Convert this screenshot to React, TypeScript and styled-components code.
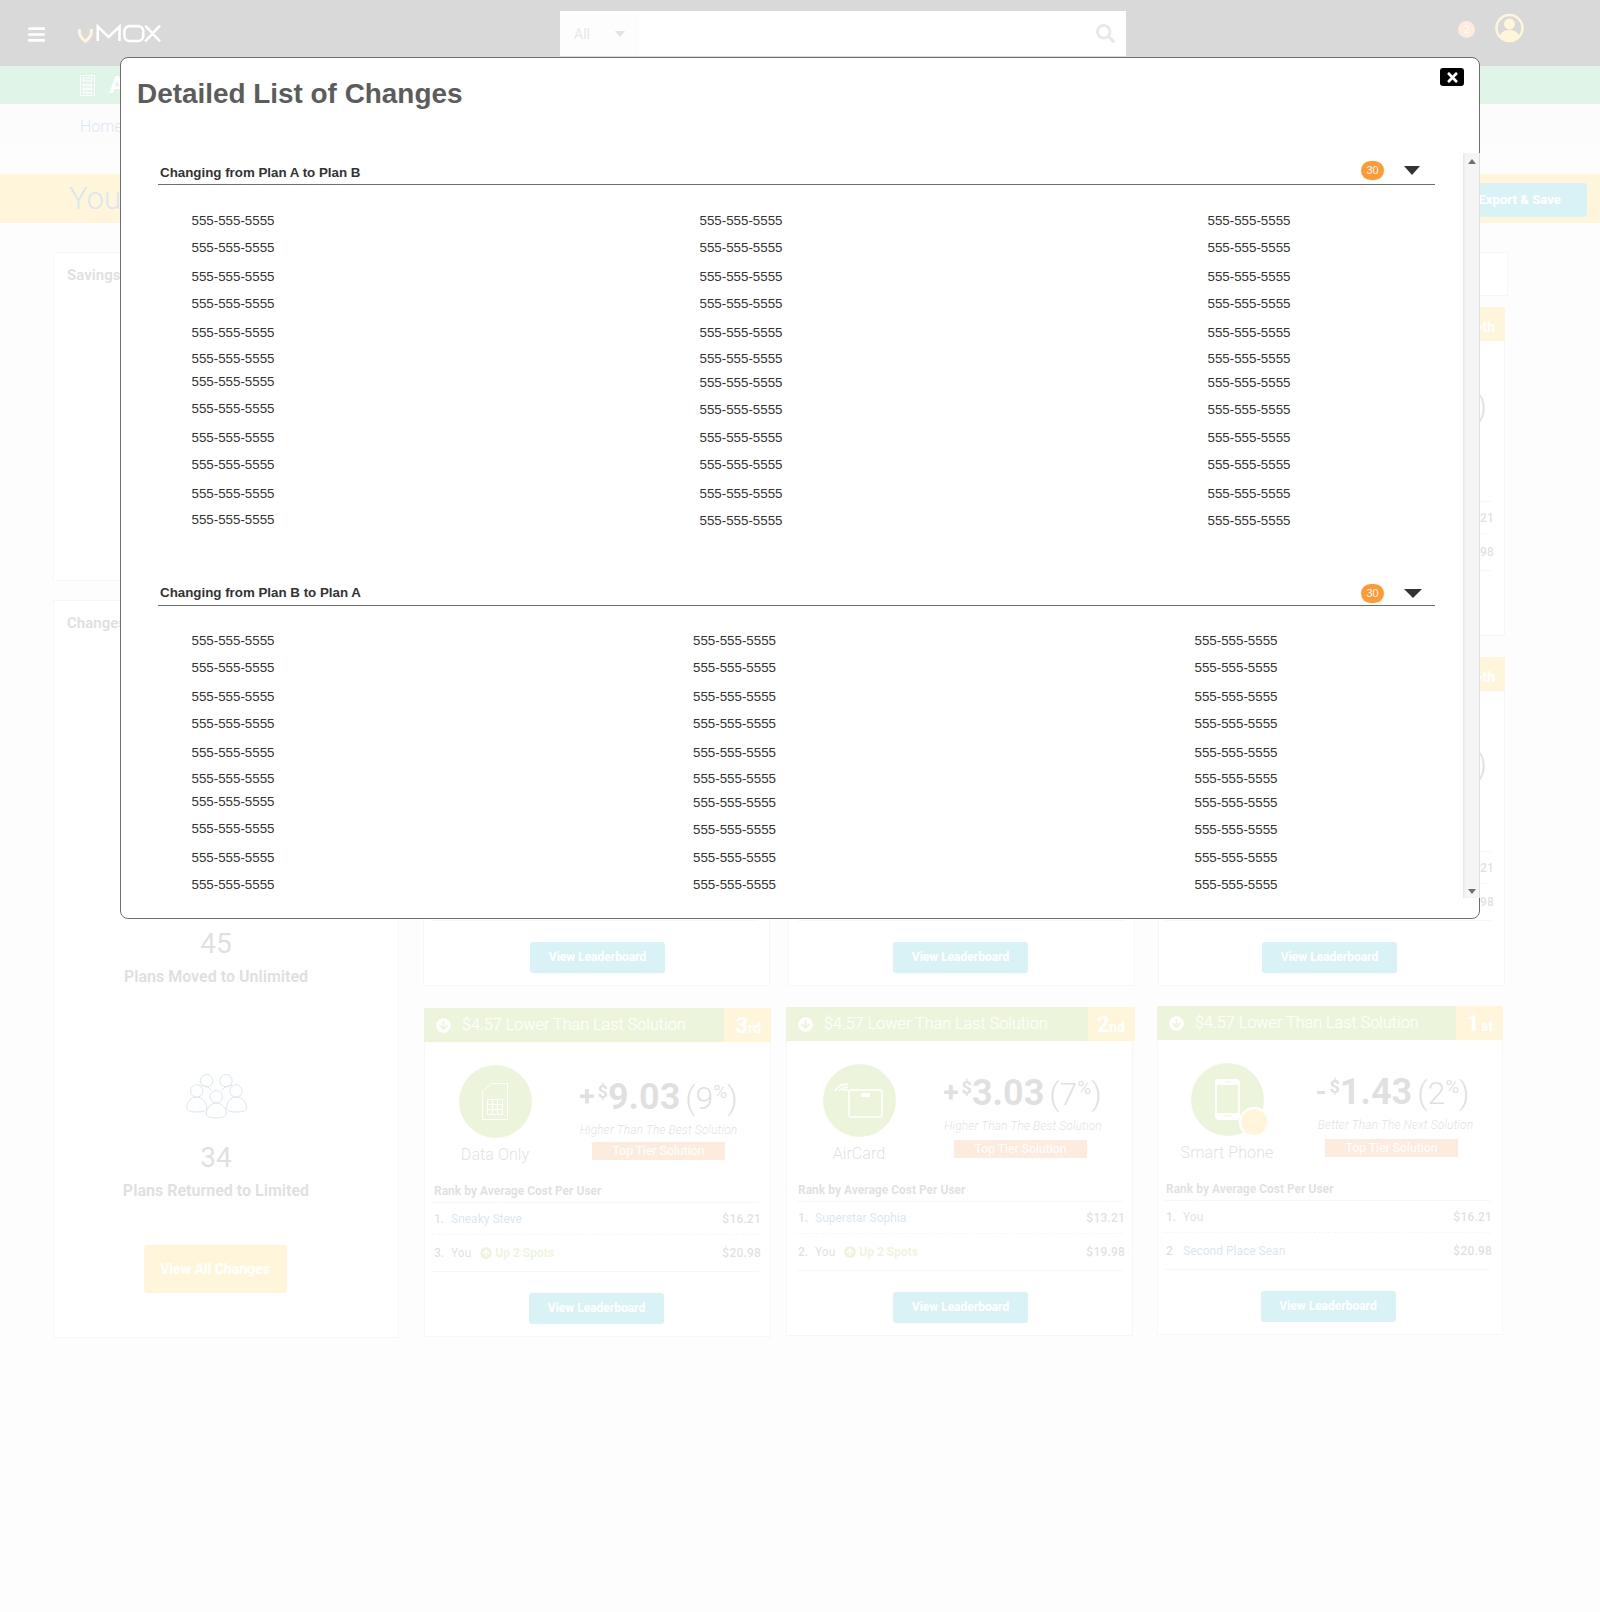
import React from 'react';
import styled, {createGlobalStyle} from 'styled-components';
import {FaArrowCircleDown, FaArrowCircleUp, FaBars, FaSearch, FaTimes} from 'react-icons/fa';

const GlobalStyle = createGlobalStyle`
    html, body {
        margin: 0;
        padding: 0;
    }
    body {
        background: #f2f2f2;
        font-family: Roboto, "Liberation Sans", sans-serif;
    }
`;

const colors = {
    text: '#333',
    green: '#82bc16',
    yellow: '#ffbc08',
    orange: '#f17a1c',
    cyan: '#02a8c3',
    blue: '#01589b',
    line: '#c9c9c9',
};

type IconKind = 'sim' | 'aircard' | 'phone';

interface Standing {
    rank: string;
    name: string;
    price: string;
    isLink?: boolean;
    spots?: string;
}

interface CardData {
    place: string;
    suffix: string;
    icon: IconKind;
    label: string;
    sign: string;
    amount: string;
    percent: string;
    note: string;
    priceTop: number;
    iconShift: number;
    rankShift: number;
    buttonShift: number;
    standings: Standing[];
    width?: number;
    lift?: number;
    headOver?: number;
    noteShift?: number;
    priceShift?: number;
    tagBump?: number;
    placeGap?: number;
}

const sophia: Standing[] = [
    {rank: '1.', name: 'Superstar Sophia', price: '$13.21', isLink: true},
    {rank: '2.', name: 'You', price: '$19.98', spots: 'Up 2 Spots'},
];
const steve: Standing[] = [
    {rank: '1.', name: 'Sneaky Steve', price: '$16.21', isLink: true},
    {rank: '3.', name: 'You', price: '$20.98', spots: 'Up 2 Spots'},
];
const sean: Standing[] = [
    {rank: '1.', name: 'You', price: '$16.21'},
    {rank: '2', name: 'Second Place Sean', price: '$20.98', isLink: true},
];

const higher = 'Higher Than The Best Solution';

const cardRows: {offset: number; top: number; gaps: number[]; cards: CardData[]}[] = [
    {
        offset: -1,
        top: 0,
        gaps: [18, 23],
        cards: [
            {place: '5', suffix: 'th', icon: 'sim', label: 'Data Only', sign: '+', amount: '9.03', percent: '9', note: higher, priceTop: 34, iconShift: -3, rankShift: -1, buttonShift: 1, standings: steve, width: 347},
            {place: '6', suffix: 'th', icon: 'aircard', label: 'AirCard', sign: '+', amount: '3.03', percent: '7', note: higher, priceTop: 31, iconShift: -1, rankShift: 1, buttonShift: -1, standings: sophia, width: 347},
            {place: '4', suffix: 'th', icon: 'phone', label: 'Smart Phone', sign: '+', amount: '12.03', percent: '9', note: higher, priceTop: 43, iconShift: -4, rankShift: -2, buttonShift: -2, standings: steve, width: 347, priceShift: 10},
        ],
    },
    {
        offset: -1,
        top: 0,
        gaps: [18, 23],
        cards: [
            {place: '5', suffix: 'th', icon: 'sim', label: 'Data Only', sign: '+', amount: '9.03', percent: '9', note: higher, priceTop: 34, iconShift: -3, rankShift: -1, buttonShift: 1, standings: steve, width: 347},
            {place: '6', suffix: 'th', icon: 'aircard', label: 'AirCard', sign: '+', amount: '3.03', percent: '7', note: higher, priceTop: 31, iconShift: -1, rankShift: 1, buttonShift: -1, standings: sophia, width: 347},
            {place: '4', suffix: 'th', icon: 'phone', label: 'Smart Phone', sign: '+', amount: '12.03', percent: '9', note: higher, priceTop: 51, iconShift: -4, rankShift: -2, buttonShift: -2, standings: steve, width: 347, priceShift: 10},
        ],
    },
    {
        offset: 0,
        top: 1,
        gaps: [15, 24],
        cards: [
            {place: '3', suffix: 'rd', icon: 'sim', label: 'Data Only', sign: '+', amount: '9.03', percent: '9', note: higher, priceTop: 34, iconShift: -3, rankShift: -1, buttonShift: -1, standings: steve, width: 347, tagBump: 1},
            {place: '2', suffix: 'nd', icon: 'aircard', label: 'AirCard', sign: '+', amount: '3.03', percent: '7', note: higher, priceTop: 31, iconShift: -1, rankShift: 1, buttonShift: 1, standings: sophia, width: 347, lift: 1, headOver: 2, priceShift: 4, noteShift: 5},
            {place: '1', suffix: 'st', icon: 'phone', label: 'Smart Phone', sign: '-', amount: '1.43', percent: '2', note: 'Better Than The Next Solution', priceTop: 31, iconShift: -4, rankShift: -2, buttonShift: -2, standings: sean, lift: 2, noteShift: 8, priceShift: 2, placeGap: 2},
        ],
    },
];

const leftGaps = [27, 29, 27, 29, 26, 23, 27, 29, 27, 29, 26, 16];
const otherGaps = [27, 29, 27, 29, 26, 24, 27, 28, 27, 29, 27, 16];

const lists = [
    {title: 'Changing from Plan A to Plan B', step: 508, titleGap: 3, badgeGap: 1, arrow: 16, arrowRight: 15, listTop: 28},
    {title: 'Changing from Plan B to Plan A', step: 501.5, titleGap: 4, badgeGap: -2, arrow: 18, arrowRight: 13, listTop: 27},
];

const Page = styled.div`
    position: relative;
    width: 1600px;
    min-height: 1612px;
    overflow: hidden;
`;

const TopBar = styled.header`
    height: 66px;
    background: #020202;
    display: flex;
    align-items: flex-start;
`;

const MenuButton = styled.div`
    margin: 25px 0 0 28px;
    width: 17px;
    color: #fff;
    font-size: 19px;
    line-height: 19px;
    display: flex;
`;

const Logo = styled.svg`
    margin: 24px 0 0 33px;
    width: 83px;
    height: 20px;
`;

const SearchBox = styled.div`
    margin: 11px 0 0 399px;
    width: 566px;
    height: 45px;
    display: flex;
    background: #fff;
`;

const SearchScope = styled.div`
    width: 79px;
    background: #eee;
    display: flex;
    align-items: center;
    padding-left: 14px;
    box-sizing: border-box;
    color: #555;
    font-size: 14px;
`;

const Caret = styled.span`
    margin-left: 25px;
    border-left: 5px solid transparent;
    border-right: 5px solid transparent;
    border-top: 6px solid #444;
`;

const SearchInput = styled.div`
    flex: 1;
    display: flex;
    align-items: center;
    justify-content: flex-end;
    padding-right: 11px;
    color: #666;
    font-size: 19px;
`;

const Alerts = styled.div`
    margin: 21px 0 0 332px;
    width: 17px;
    height: 17px;
    border-radius: 50%;
    background: ${colors.orange};
    color: #fff;
    font-size: 11px;
    line-height: 17px;
    text-align: center;
`;

const Avatar = styled.svg`
    margin: 13px 0 0 20px;
    width: 29px;
    height: 30px;
`;

const SectionBar = styled.div`
    height: 38px;
    background: #30b666;
    display: flex;
    align-items: center;
    color: #fff;
    padding-left: 80px;
    font-size: 24px;
    font-weight: 700;
    gap: 14px;
`;

const Crumbs = styled.div`
    height: 40px;
    background: #eaeaea;
    padding-left: 80px;
    font-size: 16px;
    line-height: 45px;
    font-weight: 300;
    color: ${colors.blue};
`;

const TitleBand = styled.div`
    margin-top: 30px;
    height: 49px;
    background: ${colors.yellow};
    position: relative;
    display: flex;
    align-items: center;
    justify-content: space-between;
    padding: 0 13px 0 69px;
`;

const BandTitle = styled.h1`
    margin: 0;
    font-size: 31px;
    font-weight: 300;
    color: ${colors.blue};
`;

const ExportButton = styled.div`
    width: 135px;
    height: 34px;
    margin-top: 3px;
    box-sizing: border-box;
    padding-right: 26px;
    background: ${colors.cyan};
    border-radius: 3px;
    color: #fff;
    font-size: 13.2px;
    font-weight: 700;
    line-height: 34px;
    text-align: right;
`;

const Content = styled.main`
    display: flex;
    gap: 25px;
    padding: 29px 0 0 53px;
`;

const LeftColumn = styled.div`
    width: 346px;
    display: flex;
    flex-direction: column;
    gap: 19px;
`;

const Panel = styled.section<{$h: number}>`
    box-sizing: border-box;
    height: ${(p) => p.$h}px;
    background: #fff;
    border: 1px solid ${colors.line};
    display: flex;
    flex-direction: column;
`;

const PanelTitle = styled.div`
    padding: 13px 0 0 13px;
    font-size: 15px;
    font-weight: 700;
    color: ${colors.text};
`;

const PanelStats = styled.div`
    margin-top: auto;
    padding: 0 20px 44px 0;
    display: flex;
    flex-direction: column;
    align-items: center;
`;

const StatNumber = styled.div`
    margin-top: 21px;
    font-size: 28px;
    line-height: 36px;
    color: ${colors.text};
`;

const StatLabel = styled.div`
    margin-top: 5px;
    font-size: 16px;
    line-height: 20px;
    font-weight: 700;
    color: ${colors.text};
`;

const PeopleIcon = styled.svg`
    margin: 87px 0 0 2px;
    width: 62px;
    height: 45px;
`;

const ViewAll = styled.div`
    margin: 44px 2px 0 0;
    width: 143px;
    height: 48px;
    border-radius: 3px;
    background: ${colors.yellow};
    color: #fff;
    font-size: 14px;
    font-weight: 700;
    line-height: 48px;
    text-align: center;
`;

const RightColumn = styled.div`
    width: 1084px;
    display: flex;
    flex-direction: column;
`;

const TopBox = styled.div`
    height: 44px;
    box-sizing: border-box;
    background: #fff;
    border: 1px solid ${colors.line};
    margin-bottom: 11px;
`;

const CardRow = styled.div<{$offset: number; $top: number}>`
    display: flex;
    margin: ${(p) => p.$top}px 0 21px ${(p) => p.$offset}px;
`;

const Card = styled.article<{$w: number; $lift: number; $gap: number}>`
    box-sizing: border-box;
    width: ${(p) => p.$w}px;
    height: 329px;
    margin-top: ${(p) => -p.$lift}px;
    margin-right: ${(p) => p.$gap}px;
    background: #fff;
    border: 1px solid ${colors.line};
    border-top: 0;
    display: flex;
    flex-direction: column;
`;

const CardHead = styled.div<{$over: number}>`
    height: 34px;
    margin: 0 ${(p) => -1 - p.$over}px 0 -1px;
    background: ${colors.green};
    display: flex;
    color: #fff;
`;

const HeadText = styled.div`
    flex: 1;
    display: flex;
    align-items: center;
    gap: 11px;
    padding: 0 0 2px 12px;
    font-size: 16.2px;
    font-weight: 300;
    & > svg {
        margin-top: 2px;
        font-size: 15px;
    }
`;

const Place = styled.div<{$gap: number}>`
    width: 47px;
    box-sizing: border-box;
    background: ${colors.yellow};
    display: flex;
    align-items: baseline;
    justify-content: flex-end;
    padding: 2px 10px 0 0;
    line-height: 32px;
    font-size: 22px;
    font-weight: 700;
    & > small {
        margin-left: ${(p) => p.$gap}px;
        font-size: 14px;
    }
`;

const Summary = styled.div`
    height: 141px;
    display: flex;
`;

const IconColumn = styled.div<{$shift: number}>`
    width: 146px;
    margin-left: ${(p) => p.$shift}px;
    margin-right: ${(p) => -p.$shift}px;
    padding-top: 23px;
    display: flex;
    flex-direction: column;
    align-items: center;
`;

const IconDisc = styled.div`
    position: relative;
    width: 73px;
    height: 73px;
    border-radius: 50%;
    background: ${colors.green};
    display: flex;
    align-items: center;
    justify-content: center;
`;

const PhoneDot = styled.span`
    position: absolute;
    left: 48px;
    top: 44px;
    width: 30px;
    height: 30px;
    box-sizing: border-box;
    border-radius: 50%;
    border: 2px solid #fff;
    background: ${colors.yellow};
`;

const DeviceLabel = styled.div`
    margin-top: 7px;
    font-size: 16.2px;
    line-height: 20px;
    font-weight: 300;
    color: ${colors.text};
    white-space: nowrap;
`;

const PriceColumn = styled.div<{$top: number}>`
    width: 175px;
    padding-top: ${(p) => p.$top}px;
    display: flex;
    flex-direction: column;
    align-items: center;
    color: ${colors.text};
`;

const Price = styled.div<{$shift: number}>`
    height: 42px;
    margin-left: ${(p) => p.$shift}px;
    line-height: 42px;
    white-space: nowrap;
    display: flex;
    justify-content: center;
    font-size: 32px;
    font-weight: 300;
`;

const PriceSign = styled.span`
    font-size: 28px;
    font-weight: 700;
    margin-right: 3px;
`;

const Super = styled.sup<{$bold?: boolean}>`
    font-size: ${(p) => (p.$bold ? 18 : 19)}px;
    line-height: 0;
    vertical-align: 11px;
    font-weight: ${(p) => (p.$bold ? 700 : 400)};
`;

const Amount = styled.b`
    font-size: 36px;
    font-weight: 700;
    margin-right: 5px;
`;

const Note = styled.div<{$shift: number}>`
    margin: 4px 0 0 ${(p) => p.$shift}px;
    font-size: 12px;
    line-height: 16px;
    font-style: italic;
    font-weight: 300;
    white-space: nowrap;
    letter-spacing: 0.1px;
`;

const TopTier = styled.div<{$gap: number}>`
    margin-top: ${(p) => p.$gap}px;
    flex: none;
    width: 133px;
    height: 18px;
    background: ${colors.orange};
    color: #fff;
    font-size: 12px;
    line-height: 18px;
    text-align: center;
    letter-spacing: 0.1px;
`;

const Ranking = styled.div<{$shift: number}>`
    margin: 0 ${(p) => 10 - p.$shift}px 0 ${(p) => 8 + p.$shift}px;
`;

const RankTitle = styled.div`
    padding: 0 2px 3px;
    font-size: 12px;
    line-height: 16px;
    font-weight: 700;
    color: ${colors.text};
    border-bottom: 1px solid ${colors.line};
`;

const RankRow = styled.div<{$last?: boolean}>`
    height: ${(p) => (p.$last ? 36 : 31)}px;
    padding: 0 0 0 2px;
    display: flex;
    align-items: center;
    font-size: 12px;
    color: ${colors.text};
    border-bottom: 1px ${(p) => (p.$last ? 'solid' : 'dashed')} ${colors.line};
`;

const RankNumber = styled.b`
    width: 17px;
    font-weight: 500;
`;

const RankName = styled.span<{$link?: boolean}>`
    color: ${(p) => (p.$link ? colors.blue : colors.text)};
`;

const Spots = styled.b`
    margin-left: 9px;
    color: ${colors.green};
    display: flex;
    align-items: center;
    gap: 3px;
`;

const RankPrice = styled.b`
    margin: 0 -2px 0 auto;
    font-weight: 500;
    letter-spacing: 0.2px;
`;

const LeaderboardButton = styled.div<{$shift: number}>`
    width: 135px;
    height: 31px;
    margin: auto 0 12px calc(50% - 67.5px + ${(p) => p.$shift}px);
    border-radius: 3px;
    background: ${colors.cyan};
    color: #fff;
    font-size: 12px;
    font-weight: 700;
    line-height: 30px;
    text-align: center;
`;

const Backdrop = styled.div`
    position: absolute;
    inset: 0;
    background: rgba(255, 255, 255, 0.85);
`;

const Modal = styled.div`
    position: absolute;
    left: 120px;
    top: 57px;
    width: 1360px;
    height: 862px;
    box-sizing: border-box;
    background: #fff;
    border: 1px solid #6e6e6e;
    border-radius: 8px;
    font-family: "Liberation Sans", Arial, sans-serif;
`;

const ModalTitle = styled.h2`
    margin: 0;
    height: 95px;
    box-sizing: border-box;
    padding: 20px 0 0 16px;
    font-size: 27.9px;
    line-height: 32px;
    font-weight: 700;
    color: #5c5c5c;
`;

const CloseButton = styled.button`
    position: absolute;
    top: 10px;
    right: 15px;
    width: 24px;
    height: 18px;
    padding: 0;
    border: 0;
    border-radius: 3px;
    background: #000;
    color: #fff;
    font-size: 15px;
    display: flex;
    align-items: center;
    justify-content: center;
`;

const ModalBody = styled.div`
    height: 745px;
    display: flex;
    margin-right: -1px;
`;

const ListArea = styled.div`
    flex: 1;
    overflow: hidden;
`;

const ListSection = styled.section`
    margin-bottom: 45px;
`;

const ListHead = styled.div<{$gap: number}>`
    margin-left: 37px;
    width: 1277px;
    height: 32px;
    box-sizing: border-box;
    padding: 0 0 ${(p) => p.$gap}px 2px;
    border-bottom: 1px solid #6e6e6e;
    display: flex;
    align-items: flex-end;
    justify-content: space-between;
    font-size: 13.33px;
    line-height: 16px;
    color: #333;
`;

const ListHeadTitle = styled.div`
    font-weight: 700;
`;

const HeadTools = styled.div<{$gap: number; $right: number}>`
    display: flex;
    align-items: center;
    gap: 20px;
    margin-bottom: ${(p) => p.$gap}px;
    padding-right: ${(p) => p.$right}px;
`;

const CountBadge = styled.span`
    width: 23px;
    height: 19px;
    border-radius: 10px;
    background: #ff9933;
    color: #fff;
    font-size: 11px;
    line-height: 19px;
    text-align: center;
`;

const ArrowDown = styled.span<{$w: number}>`
    border-left: ${(p) => p.$w / 2}px solid transparent;
    border-right: ${(p) => p.$w / 2}px solid transparent;
    border-top: 9px solid #333;
`;

const Numbers = styled.div<{$top: number; $step: number}>`
    display: grid;
    grid-template-columns: repeat(3, ${(p) => p.$step}px);
    padding: ${(p) => p.$top}px 0 0 70.5px;
`;

const NumberRow = styled.div<{$h: number}>`
    height: ${(p) => p.$h}px;
    font-size: 13.33px;
    line-height: 16px;
    color: #333;
`;

const Scrollbar = styled.div`
    width: 17px;
    box-sizing: border-box;
    background: linear-gradient(to right, #e8e8e8 0, #f5f5f5 3px);
    border-right: 1px solid #dedede;
    display: flex;
    flex-direction: column;
    align-items: center;
    justify-content: space-between;
    padding: 6px 0 4px 1px;
`;

const ScrollUp = styled.span`
    border-left: 4.5px solid transparent;
    border-right: 4.5px solid transparent;
    border-bottom: 5px solid #707070;
`;

const ScrollDown = styled.span`
    border-left: 4.5px solid transparent;
    border-right: 4.5px solid transparent;
    border-top: 5px solid #707070;
`;

const SimIcon = () => (
    <svg
        width='26'
        height='37'
        viewBox='0 0 26 37'
        fill='none'
        stroke='#fff'
        strokeWidth='1'
    >
        <path d='M9 .5h16.5v36H.5V9z'/>
        <path d='M5.5 16.500h15v15h-15zM5.5 21.500h15M5.5 26.500h15M10.500 21.500v10M15.500 16.500v15M10.500 16.500v5'/>
    </svg>
);

const AirCardIcon = () => (
    <svg
        width='50'
        height='36'
        viewBox='0 0 50 36'
        fill='none'
        stroke='#fff'
    >
        <rect
            x='15'
            y='7'
            width='33'
            height='27'
            rx='2'
            strokeWidth='1.5'
        />
        <rect
            x='27'
            y='10'
            width='9'
            height='4'
            fill='#fff'
            stroke='none'
        />
        <path
            d='M1 8C3 4 8 1 14 1M5 8c2-2 5-4 9-4M9 8c1-1 3-2 5-1'
            strokeWidth='1.6'
        />
    </svg>
);

const PhoneIcon = () => (
    <svg
        width='25'
        height='41'
        viewBox='0 0 25 41'
    >
        <rect
            width='25'
            height='41'
            rx='4'
            fill='#fff'
        />
        <rect
            x='2'
            y='6'
            width='21'
            height='28'
            fill='#82bc16'
        />
        <rect
            x='10'
            y='2.500'
            width='5'
            height='1'
            fill='#82bc16'
        />
        <rect
            x='8.500'
            y='36.500'
            width='8'
            height='1'
            fill='#82bc16'
        />
    </svg>
);

const deviceIcons: Record<IconKind, React.ReactNode> = {
    sim: <SimIcon/>,
    aircard: <AirCardIcon/>,
    phone: <PhoneIcon/>,
};

const SolutionCard = ({data, gap}: {data: CardData; gap: number}) => (
    <Card
        $w={data.width ?? 346}
        $lift={data.lift ?? 0}
        $gap={gap}
    >
        <CardHead $over={data.headOver ?? 0}>
            <HeadText>
                <FaArrowCircleDown/>
                {'$4.57 Lower Than Last Solution'}
            </HeadText>
            <Place $gap={data.placeGap ?? 0}>
                {data.place}
                <small>{data.suffix}</small>
            </Place>
        </CardHead>
        <Summary>
            <IconColumn $shift={data.iconShift}>
                <IconDisc>
                    {deviceIcons[data.icon]}
                    {data.icon === 'phone' && <PhoneDot/>}
                </IconDisc>
                <DeviceLabel>{data.label}</DeviceLabel>
            </IconColumn>
            <PriceColumn $top={data.priceTop}>
                <Price $shift={data.priceShift ?? 0}>
                    <PriceSign>{data.sign}</PriceSign>
                    <span>
                        <Super $bold={true}>{'$'}</Super>
                        <Amount>{data.amount}</Amount>
                        {'('}
                        {data.percent}
                        <Super>{'%'}</Super>
                        {')'}
                    </span>
                </Price>
                <Note $shift={data.noteShift ?? 0}>{data.note}</Note>
                <TopTier $gap={37 - data.priceTop + (data.tagBump ?? 0)}>{'Top Tier Solution'}</TopTier>
            </PriceColumn>
        </Summary>
        <Ranking $shift={data.rankShift}>
            <RankTitle>{'Rank by Average Cost Per User'}</RankTitle>
            {data.standings.map((row, i) => (
                <RankRow
                    key={row.rank}
                    $last={i === data.standings.length - 1}
                >
                    <RankNumber>{row.rank}</RankNumber>
                    <RankName $link={row.isLink}>{row.name}</RankName>
                    {row.spots && (
                        <Spots>
                            <FaArrowCircleUp/>
                            {row.spots}
                        </Spots>
                    )}
                    <RankPrice>{row.price}</RankPrice>
                </RankRow>
            ))}
        </Ranking>
        <LeaderboardButton $shift={data.buttonShift}>{'View Leaderboard'}</LeaderboardButton>
    </Card>
);

const People = () => (
    <PeopleIcon
        viewBox='0 0 62 45'
        fill='none'
        stroke={colors.blue}
        strokeWidth='1'
    >
        <circle
            cx='20.7'
            cy='6.7'
            r='6.2'
        />
        <circle
            cx='40'
            cy='6.7'
            r='6.2'
        />
        <circle
            cx='10.7'
            cy='17'
            r='6.2'
        />
        <circle
            cx='50'
            cy='17'
            r='6.2'
        />
        <circle
            cx='30.3'
            cy='22.7'
            r='6.2'
        />
        <path d='M.7 34c0-6 4.500-11 10-11s10 5 10 11c0 3-5 4-10 4s-10-1-10-4z'/>
        <path d='M40.500 34c0-6 4.500-11 10-11s10 5 10 11c0 3-5 4-10 4s-10-1-10-4z'/>
        <path d='M20.300 40c0-6 4.500-11 10-11s10 5 10 11c0 3-5 4-10 4s-10-1-10-4z'/>
        <path d='M15 11.500c4 0 8 1 10 5M46 11.500c-4 0-8 1-10 5'/>
    </PeopleIcon>
);

const NumberList = ({step, top}: {step: number; top: number}) => (
    <Numbers
        $top={top}
        $step={step}
    >
        {[leftGaps, otherGaps, otherGaps].map((gaps, col) => (
            <div key={col}>
                {gaps.map((h, i) => (
                    <NumberRow
                        key={i}
                        $h={h}
                    >
                        {'555-555-5555'}
                    </NumberRow>
                ))}
            </div>
        ))}
    </Numbers>
);

export default function App() {
    return (
        <Page>
            <GlobalStyle/>
            <TopBar>
                <MenuButton><FaBars/></MenuButton>
                <Logo
                    viewBox='0 0 84 20'
                    fill='none'
                >
                    <path
                        d='M1.500 5v3c0 5 4 8 6 9.500 2-1.500 6-4.500 6-9.500V5'
                        stroke={colors.yellow}
                        strokeWidth='3'
                    />
                    <path
                        d='M20 17V2.500L31 13 42 2.500V17M52 2h9a5 5 0 0 1 5 5v5a5 5 0 0 1-5 5h-9a5 5 0 0 1-5-5V7a5 5 0 0 1 5-5zM68 1.500l15 16M83 1.500l-15 16'
                        stroke='#fff'
                        strokeWidth='2.600'
                    />
                </Logo>
                <SearchBox>
                    <SearchScope>
                        {'All'}
                        <Caret/>
                    </SearchScope>
                    <SearchInput><FaSearch/></SearchInput>
                </SearchBox>
                <Alerts>{'2'}</Alerts>
                <Avatar viewBox='0 0 29 30'>
                    <circle
                        cx='14.500'
                        cy='15'
                        r='13'
                        fill='none'
                        stroke={colors.yellow}
                        strokeWidth='2.500'
                    />
                    <circle
                        cx='14.500'
                        cy='11'
                        r='5.500'
                        fill={colors.yellow}
                    />
                    <path
                        d='M5 23c1-4 5-6 9.500-6s8.500 2 9.500 6c-2.500 2.500-6 4-9.500 4S7.500 25.500 5 23z'
                        fill={colors.yellow}
                    />
                </Avatar>
            </TopBar>
            <SectionBar>
                <svg
                    width='15'
                    height='21'
                    viewBox='0 0 15 21'
                    fill='none'
                    stroke='#fff'
                >
                    <rect
                        x='.5'
                        y='.5'
                        width='14'
                        height='20'
                    />
                    <path d='M3 3h9v3H3zM3 9h2v2H3zM6.500 9h2v2h-2zM10 9h2v2h-2zM3 13h2v2H3zM6.500 13h2v2h-2zM10 13h2v2h-2zM3 17h2v1.500H3zM6.500 17h2v1.500h-2zM10 17h2v1.500h-2z'/>
                </svg>
                {'Analysis'}
            </SectionBar>
            <Crumbs>{'Home'}</Crumbs>
            <TitleBand>
                <BandTitle>{'Your Solution'}</BandTitle>
                <ExportButton>{'Export & Save'}</ExportButton>
            </TitleBand>
            <Content>
                <LeftColumn>
                    <Panel $h={329}>
                        <PanelTitle>{'Savings'}</PanelTitle>
                    </Panel>
                    <Panel $h={738}>
                        <PanelTitle>{'Changes'}</PanelTitle>
                        <PanelStats>
                            <People/>
                            <StatNumber>{'45'}</StatNumber>
                            <StatLabel>{'Plans Moved to Unlimited'}</StatLabel>
                            <People/>
                            <StatNumber>{'34'}</StatNumber>
                            <StatLabel>{'Plans Returned to Limited'}</StatLabel>
                            <ViewAll>{'View All Changes'}</ViewAll>
                        </PanelStats>
                    </Panel>
                </LeftColumn>
                <RightColumn>
                    <TopBox/>
                    {cardRows.map((row, r) => (
                        <CardRow
                            key={r}
                            $offset={row.offset}
                            $top={row.top}
                        >
                            {row.cards.map((card, c) => (
                                <SolutionCard
                                    key={card.icon}
                                    data={card}
                                    gap={row.gaps[c] ?? 0}
                                />
                            ))}
                        </CardRow>
                    ))}
                </RightColumn>
            </Content>
            <Backdrop/>
            <Modal>
                <ModalTitle>{'Detailed List of Changes'}</ModalTitle>
                <CloseButton><FaTimes/></CloseButton>
                <ModalBody>
                    <ListArea>
                        {lists.map((list) => (
                            <ListSection key={list.title}>
                                <ListHead $gap={list.titleGap}>
                                    <ListHeadTitle>{list.title}</ListHeadTitle>
                                    <HeadTools
                                        $gap={list.badgeGap}
                                        $right={list.arrowRight}
                                    >
                                        <CountBadge>{'30'}</CountBadge>
                                        <ArrowDown $w={list.arrow}/>
                                    </HeadTools>
                                </ListHead>
                                <NumberList
                                    step={list.step}
                                    top={list.listTop}
                                />
                            </ListSection>
                        ))}
                    </ListArea>
                    <Scrollbar>
                        <ScrollUp/>
                        <ScrollDown/>
                    </Scrollbar>
                </ModalBody>
            </Modal>
        </Page>
    );
}
